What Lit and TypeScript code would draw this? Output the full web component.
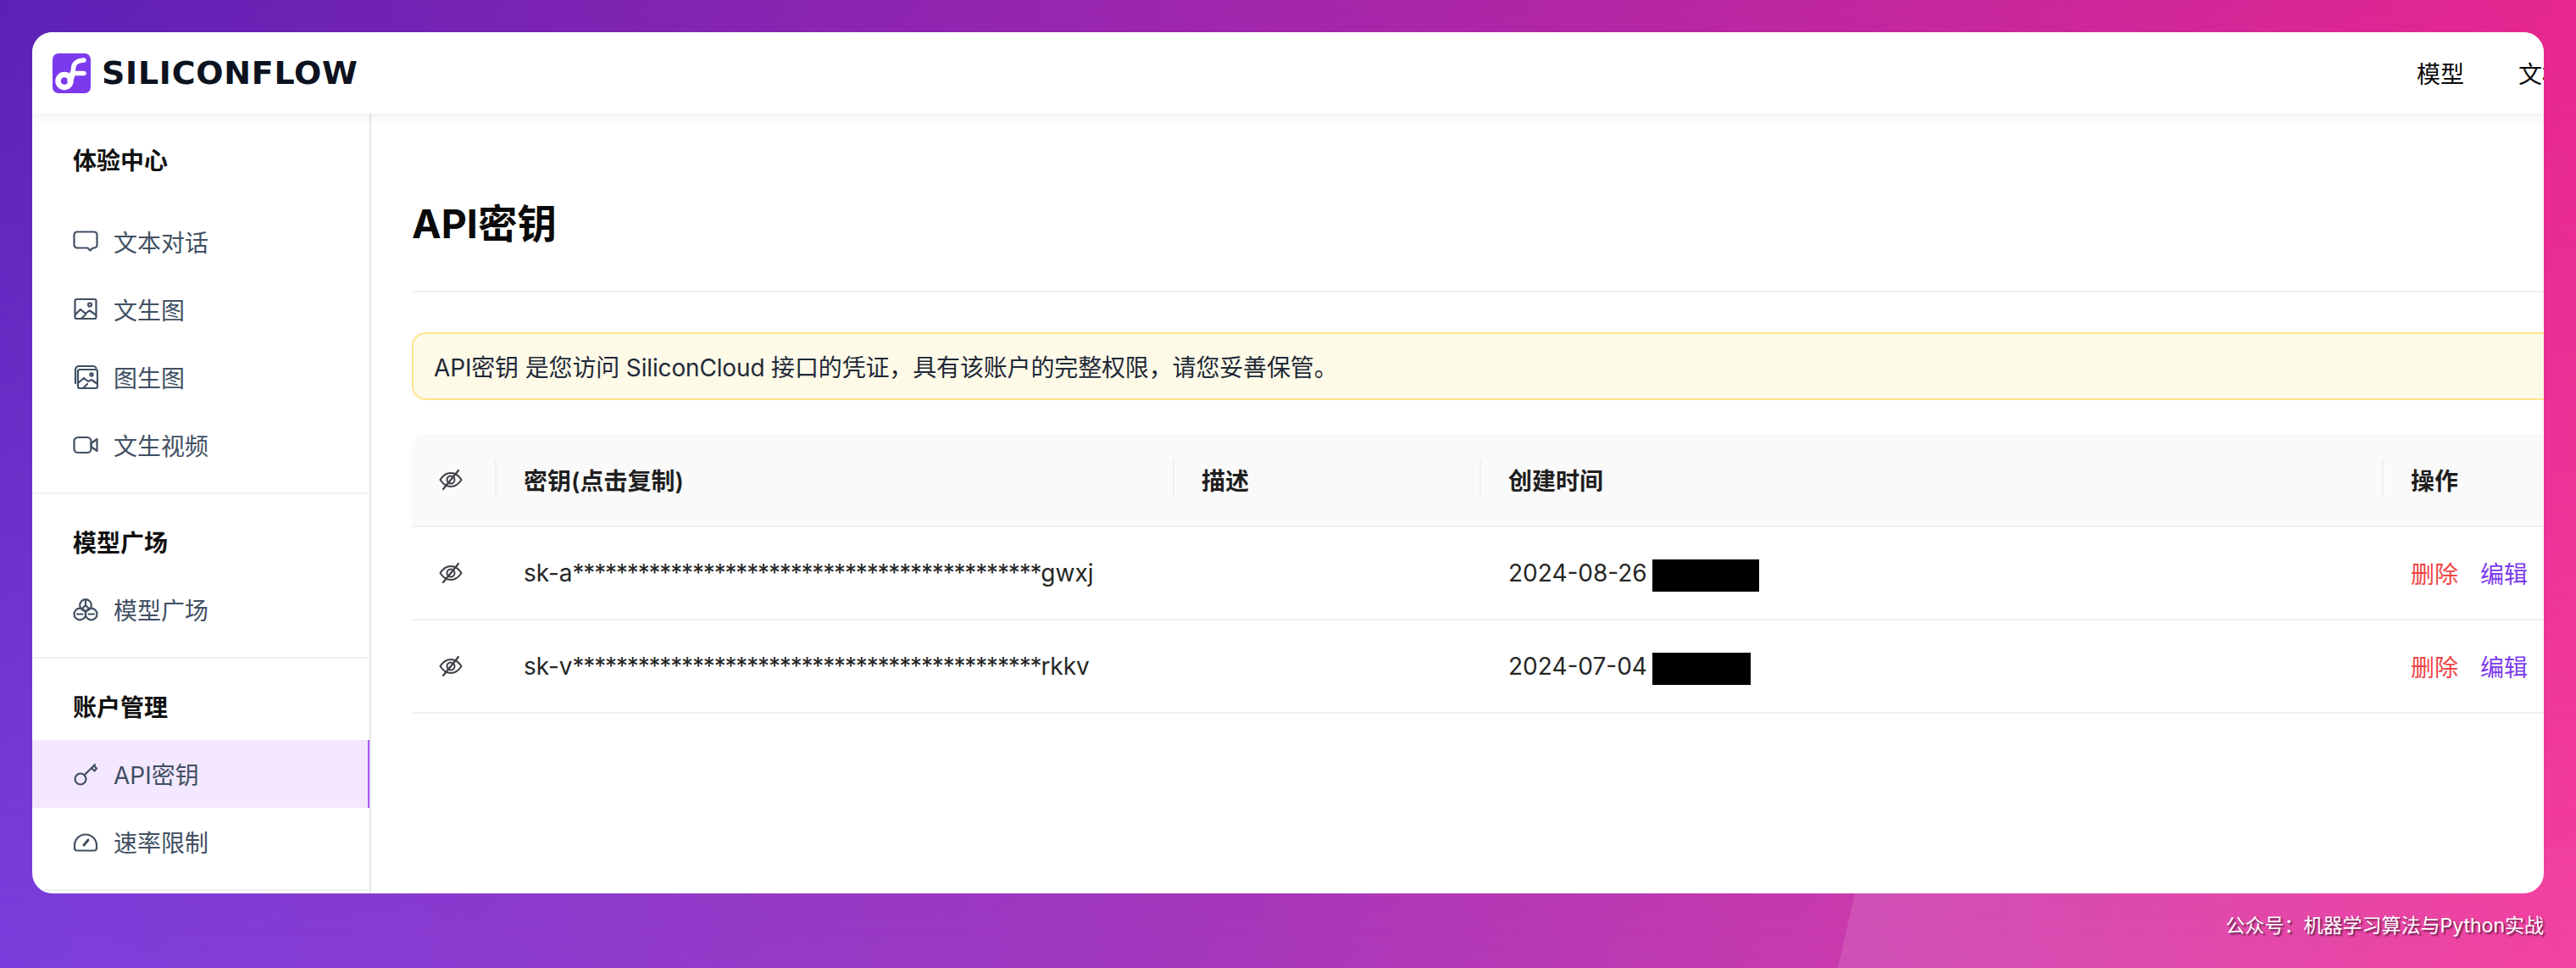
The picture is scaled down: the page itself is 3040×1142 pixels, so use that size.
import { LitElement, html, css, svg } from "lit";
import { customElement } from "lit/decorators.js";

const ic = (body: unknown) => html`<svg class="ic" viewBox="0 0 30 30" fill="none" stroke="currentColor" stroke-width="2.2" stroke-linecap="round" stroke-linejoin="round">${body}</svg>`;

const icons = {
  chat: ic(svg`<path d="M5 3.500h20A3.500 3.500 0 0 1 28.500 7v12a3.500 3.500 0 0 1-3.500 3.500h-1.500l-3 3-3-3H5A3.500 3.500 0 0 1 1.500 19V7A3.500 3.500 0 0 1 5 3.500z"/>`),
  image: ic(svg`<rect x="2.500" y="3" width="25" height="23" rx="2"/><circle cx="20" cy="9.500" r="2"/><path d="M3 21l6-6 6 5 3-2.500 2-1 7 5"/><path d="M10 26l5-5"/>`),
  image2: ic(svg`<path d="M3 22V6a4 4 0 0 1 4-4h17a4 4 0 0 1 3.500 2"/><rect x="6" y="6" width="23" height="22" rx="2"/><circle cx="22" cy="12" r="1.600"/><path d="M6 22l7-6 5 4 4-2 7 5"/><path d="M12 28l5-5"/>`),
  video: ic(svg`<rect x="1.500" y="6" width="20" height="18" rx="4.500"/><path d="M21.500 13l7-5v14l-7-5z"/>`),
  models: ic(svg`<circle cx="15" cy="10" r="6.800"/><circle cx="8.300" cy="20.500" r="6.800"/><circle cx="21.700" cy="20.500" r="6.800"/><path d="M15 4v6M12 13l3-3 3 3M5 20.500h6.500M18.500 20.500H25"/>`),
  key: ic(svg`<circle cx="9" cy="21" r="6.500"/><path d="M13.500 16.500L26 4M22 8l3.500 3.500 2.500-3-3-3"/>`),
  gauge: ic(svg`<path d="M4.500 25.500A3 3 0 0 1 2 22.500v-3A13 13 0 0 1 15 6.500a13 13 0 0 1 13 13v3a3 3 0 0 1-2.500 3z"/><path d="M13 19l5-6" stroke-width="3"/>`),
};

const eye = html`<svg class="eye" viewBox="0 0 28 28" fill="none" stroke="#3f3f46" stroke-width="2" stroke-linecap="round"><path d="M1.500 14C5 8.500 9 6 14 6s9 2.500 12.500 8C23 19.500 19 22 14 22S5 19.500 1.500 14z"/><circle cx="14" cy="14" r="4.500"/><path d="M5 25L23 3" stroke-width="2.200"/></svg>`;

const logo = html`<svg class="logo-mark" viewBox="0 0 45 47"><rect width="45" height="47" rx="7" fill="#7c3aed"/><g fill="none" stroke="#fff" stroke-linecap="round"><circle cx="14" cy="32.500" r="7.500" stroke-width="6.500"/><path d="M20 32c4-2 4-8 4.500-14C25 11 29 8.500 37 8" stroke-width="5.500"/><path d="M23 23.500h14" stroke-width="5.500"/></g><circle cx="13.500" cy="33" r="2" fill="#7c3aed"/></svg>`;

const ALERT = "API\u5BC6\u94A5 \u662F\u60A8\u8BBF\u95EE SiliconCloud \u63A5\u53E3\u7684\u51ED\u8BC1\uFF0C\u5177\u6709\u8BE5\u8D26\u6237\u7684\u5B8C\u6574\u6743\u9650\uFF0C\u8BF7\u60A8\u59A5\u5584\u4FDD\u7BA1\u3002";
const MARK = "\u516C\u4F17\u53F7\uFF1A\u673A\u5668\u5B66\u4E60\u7B97\u6CD5\u4E0EPython\u5B9E\u6218";

@customElement("app-root")
export class AppRoot extends LitElement {
  static styles = css`
    :host {
      display: block; position: relative; box-sizing: border-box; height: 1142px; overflow: hidden;
      padding: 38px 38px 0;
      background: linear-gradient(90deg, #7b3fdd 0%, #a238bd 45%, #f43f9e 100%);
      font-family: Inter, "Noto Sans CJK SC", sans-serif; font-size: 28px; color: #1f1f1f;
    }
    :host::before {
      content: ""; position: absolute; inset: 0;
      background: linear-gradient(90deg, #5b21b6 0%, #9c26ad 45%, #e6278f 100%);
      -webkit-mask-image: linear-gradient(180deg, #000 0%, transparent 100%);
      mask-image: linear-gradient(180deg, #000 0%, transparent 100%);
    }
    :host::after {
      content: ""; position: absolute; inset: 0;
      background: linear-gradient(90deg, rgba(255,255,255,.12) 70%, rgba(255,255,255,.02) 100%);
      clip-path: polygon(2169px 1142px, 2201px 1000px, 3040px 1000px, 3040px 1142px);
    }
    .window {
      position: relative; z-index: 1; width: 2964px; height: 1016px; background: #fff; border-radius: 24px; overflow: hidden;
      display: flex; flex-direction: column;
    }
    header {
      position: relative; z-index: 2; flex: none; box-sizing: border-box; width: 2990px; height: 96px; padding-left: 24px;
      display: flex; align-items: center; background: #fff; box-shadow: 0 2px 18px rgba(0,0,0,.07); color: #0a0a0a;
    }
    .logo-mark { width: 45px; height: 47px; flex: none; }
    .logo-text {
      margin-left: 13px; font-family: "DejaVu Sans", sans-serif; font-weight: 700; font-size: 38px; line-height: 1; color: #0d1220;
      letter-spacing: .7px; white-space: nowrap;
    }
    .spacer { flex: 1; }
    nav { display: flex; gap: 64px; }
    .body { flex: 1; display: flex; min-height: 0; }
    aside { flex: none; box-sizing: border-box; width: 400px; border-right: 2px solid #e5e7eb; display: flex; flex-direction: column; }
    .section { padding: 38px 0 16px; border-bottom: 2px solid #f0f0f0; }
    .section h2 { margin: 0 0 18px 48px; font-size: 28px; line-height: 40px; font-weight: 600; color: #111; }
    .section.first { padding-top: 36px; }
    .section.first h2 { margin-bottom: 35px; }
    .item { height: 80px; box-sizing: border-box; padding-left: 48px; display: flex; align-items: center; gap: 18px; color: #414f63; }
    .item.active { background: #f3e8ff; border-right: 2px solid #a855f7; }
    .ic { width: 30px; height: 30px; flex: none; }
    main { flex: none; width: 2600px; box-sizing: border-box; padding: 98px 0 0 48px; }
    h1 { margin: 0; font-size: 46.5px; line-height: 64px; font-weight: 700; color: #0a0a0a; }
    .rule { height: 2px; background: #f0f0f0; margin: 47px 0; }
    .alert {
      box-sizing: border-box; height: 80px; padding: 0 24px; display: flex; align-items: center; letter-spacing: -.15px;
      background: #fefae8; border: 2px solid #fde68a; border-radius: 16px; color: #1f2937;
    }
    .table { margin-top: 40px; }
    .row {
      display: grid; grid-template-columns: 100px 800px 362px 1065px 200px; height: 110px; box-sizing: border-box;
      border-bottom: 2px solid #f0f0f0; align-items: center; color: #262626;
    }
    .head { background: #fafafa; border-radius: 16px 0 0 0; font-weight: 600; color: #1f1f1f; }
    .cell { box-sizing: border-box; padding-left: 32px; position: relative; display: flex; align-items: center; }
    .head .cell + .cell::before { content: ""; position: absolute; left: -2px; top: -4px; height: 44px; width: 2px; background: #f0f0f0; }
    .eye { width: 28px; height: 28px; }
    .key { white-space: nowrap; }
    .stars { letter-spacing: -1.17px; }
    .redact { display: block; height: 38px; background: #000; margin: 6px 0 0 6px; }
    .del { color: #ef4444; }
    .edit { color: #7c3aed; margin-left: 26px; }
    .mark {
      position: relative; z-index: 1; height: 72px; width: 2964px; display: flex; justify-content: flex-end; align-items: center;
      color: #fff; font-size: 23px; text-shadow: 2px 2px 2px rgba(0,0,0,.55); white-space: nowrap;
    }
  `;

  private row(prefix: string, suffix: string, date: string, w: number) {
    return html`<div class="row">
      <div class="cell">${eye}</div>
      <div class="cell key">${prefix}<span class="stars">${"*".repeat(43)}</span>${suffix}</div>
      <div class="cell"></div>
      <div class="cell">${date}<span class="redact" style="width:${w}px"></span></div>
      <div class="cell"><span class="del">删除</span><span class="edit">编辑</span></div>
    </div>`;
  }

  private item(icon: unknown, label: string, active = false) {
    return html`<div class="item ${active ? "active" : ""}">${icon}<span>${label}</span></div>`;
  }

  render() {
    return html`
      <div class="window">
        <header>
          ${logo}<span class="logo-text">SILICONFLOW</span>
          <span class="spacer"></span>
          <nav><span>模型</span><span>文档</span></nav>
        </header>
        <div class="body">
          <aside>
            <div class="section first">
              <h2>体验中心</h2>
              ${this.item(icons.chat, "文本对话")}
              ${this.item(icons.image, "文生图")}
              ${this.item(icons.image2, "图生图")}
              ${this.item(icons.video, "文生视频")}
            </div>
            <div class="section">
              <h2>模型广场</h2>
              ${this.item(icons.models, "模型广场")}
            </div>
            <div class="section">
              <h2>账户管理</h2>
              ${this.item(icons.key, "API密钥", true)}
              ${this.item(icons.gauge, "速率限制")}
            </div>
          </aside>
          <main>
            <h1>API密钥</h1>
            <div class="rule"></div>
            <div class="alert">${ALERT}</div>
            <div class="table">
              <div class="row head">
                <div class="cell">${eye}</div>
                <div class="cell">密钥(点击复制)</div>
                <div class="cell">描述</div>
                <div class="cell">创建时间</div>
                <div class="cell">操作</div>
              </div>
              ${this.row("sk-a", "gwxj", "2024-08-26", 126)}
              ${this.row("sk-v", "rkkv", "2024-07-04", 116)}
            </div>
          </main>
        </div>
      </div>
      <div class="mark">${MARK}</div>
    `;
  }
}
